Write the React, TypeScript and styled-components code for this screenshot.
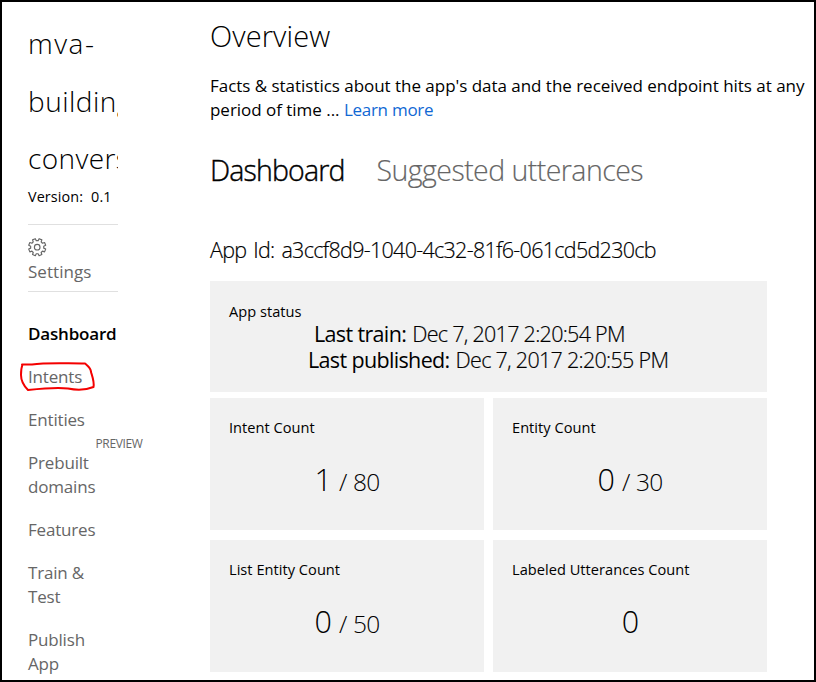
import React from "react";
import styled, { createGlobalStyle } from "styled-components";

const GlobalStyle = createGlobalStyle`
  *, *::before, *::after { box-sizing: border-box; }
  body {
    margin: 0;
    background: #fff;
    color: #000;
    font-family: "Open Sans", "Noto Sans", sans-serif;
  }
`;

const Frame = styled.div`
  display: grid;
  grid-template-columns: 90px 1fr;
  column-gap: 92px;
  width: 816px;
  height: 682px;
  padding-left: 26px;
  border: 2px solid #000;
  overflow: hidden;
  white-space: nowrap;
`;

const Sidebar = styled.aside`
  display: flex;
  flex-direction: column;
`;

const AppName = styled.h1`
  margin: 13px 0 0;
  overflow: hidden;
  font-size: 28px;
  font-weight: 300;
  line-height: 57.5px;
`;

const NameLine = styled.span<{ $spacing: number }>`
  display: block;
  letter-spacing: ${(p) => p.$spacing}px;
`;

const Version = styled.div`
  display: flex;
  gap: 8px;
  height: 38px;
  margin-top: -2px;
  font-size: 14.4px;
  line-height: 21px;
  letter-spacing: 0.1px;
`;

const SettingsLink = styled.a`
  display: flex;
  flex-direction: column;
  height: 68px;
  padding-top: 13px;
  border-top: 1px solid #e0e0e0;
  border-bottom: 1px solid #e0e0e0;
  color: #666;
  font-size: 17px;
  line-height: 24px;
  letter-spacing: 0.05px;

  svg { margin-bottom: 3px; }
`;

const Nav = styled.nav`
  display: flex;
  flex-direction: column;
  gap: 19px;
  margin-top: 30px;
`;

const NavItem = styled.a<{ $active?: boolean }>`
  position: relative;
  color: ${(p) => (p.$active ? "#000" : "#666")};
  font-size: 17px;
  font-weight: ${(p) => (p.$active ? 600 : 400)};
  line-height: 24px;
  letter-spacing: -0.18px;
  white-space: pre-line;
`;

const PreviewTag = styled.span`
  position: absolute;
  top: -15px;
  left: 67.5px;
  font-size: 12px;
  line-height: 16px;
  letter-spacing: -0.36px;
`;

const Ring = styled.svg`
  position: absolute;
  top: -5px;
  left: -10px;
  overflow: visible;
`;

const Main = styled.main`
  display: flex;
  flex-direction: column;
`;

const Heading = styled.h2`
  margin: 14px 0 0;
  font-size: 29px;
  font-weight: 300;
  line-height: 40px;
  letter-spacing: 0.1px;
`;

const Intro = styled.p`
  margin: 18px 0 0;
  font-size: 17px;
  line-height: 24px;
  letter-spacing: -0.03px;
`;

const IntroLink = styled.a`
  color: #1068d4;
  letter-spacing: -0.27px;
`;

const Tabs = styled.div`
  display: flex;
  gap: 32px;
  margin-top: 28px;
  font-size: 28.5px;
  line-height: 40px;
`;

const Tab = styled.span<{ $active?: boolean }>`
  color: ${(p) => (p.$active ? "#000" : "#666")};
  font-weight: 300;
  letter-spacing: ${(p) => (p.$active ? -0.85 : -0.55)}px;
  -webkit-text-stroke: ${(p) => (p.$active ? 0.4 : 0.15)}px currentColor;
`;

const AppId = styled.div`
  margin-top: 45px;
  font-size: 21.5px;
  font-weight: 300;
  line-height: 30px;
  letter-spacing: -0.7px;
  word-spacing: 2px;
  -webkit-text-stroke: 0.2px currentColor;
`;

const CardRow = styled.div<{ $height: number; $offset: number }>`
  display: grid;
  grid-template-columns: 274px 274px;
  grid-auto-rows: ${(p) => p.$height}px;
  gap: 10px 9px;
  margin-top: ${(p) => p.$offset}px;
`;

const Card = styled.section`
  padding: 19px 19px 0;
  background: #f1f1f1;
`;

const StatusCard = styled(Card)`
  grid-column: 1 / -1;
  padding-top: 20px;
`;

const CardTitle = styled.h3`
  margin: 0;
  font-size: 14.6px;
  font-weight: 400;
  line-height: 21px;
  letter-spacing: 0.03px;
`;

const StatusList = styled.dl`
  margin: -1px 0 0;
  font-size: 21.5px;
  line-height: 26px;
`;

const StatusLine = styled.div<{ $indent: number }>`
  display: flex;
  gap: 6px;
  padding-left: ${(p) => p.$indent}px;
`;

const Term = styled.dt`
  letter-spacing: -0.65px;
`;

const Value = styled.dd`
  margin: 0;
  font-weight: 300;
  letter-spacing: -0.71px;
  -webkit-text-stroke: 0.2px currentColor;
`;

const Count = styled.div`
  display: flex;
  justify-content: center;
  align-items: baseline;
  gap: 8px;
  margin-top: 20px;
  font-size: 30.5px;
  font-weight: 300;
  line-height: 42px;
  letter-spacing: -1px;
`;

const Limit = styled.span`
  font-size: 24.5px;
  letter-spacing: -0.8px;
  word-spacing: 1px;
`;

const counts: { title: string; value: string; limit?: string }[] = [
  { title: "Intent Count", value: "1", limit: "80" },
  { title: "Entity Count", value: "0", limit: "30" },
  { title: "List Entity Count", value: "0", limit: "50" },
  { title: "Labeled Utterances Count", value: "0" },
];

// Builds a cog outline with flat-topped teeth around a 19px box.
function gearPath(teeth: number, outer: number, inner: number) {
  const pts: string[] = [];
  const step = (Math.PI * 2) / teeth;
  for (let i = 0; i < teeth; i++) {
    const a = i * step + step / 2;
    [[-0.32, inner], [-0.22, outer], [0.22, outer], [0.32, inner]].forEach(([o, r]) => {
      const t = a + o * step;
      pts.push(`${(9.2 + r * Math.cos(t)).toFixed(2)} ${(9.2 + r * Math.sin(t)).toFixed(2)}`);
    });
  }
  return `M${pts.join("L")}Z`;
}

function GearIcon() {
  return (
    <svg width="19" height="19" viewBox="0 0 19 19" fill="none" stroke="#666" strokeWidth="1.15" strokeLinejoin="round">
      <path d={gearPath(8, 8.7, 6.6)} />
      <circle cx="9.2" cy="9.2" r="2.8" />
    </svg>
  );
}

export default function App() {
  return (
    <>
      <GlobalStyle />
      <Frame>
        <Sidebar>
          <AppName>
            <NameLine $spacing={1.5}>mva-</NameLine>
            <NameLine $spacing={0.5}>building</NameLine>
            <NameLine $spacing={0.4}>convers</NameLine>
          </AppName>
          <Version>
            <span>Version:</span>
            <span>0.1</span>
          </Version>
          <SettingsLink>
            <GearIcon />
            Settings
          </SettingsLink>
          <Nav>
            <NavItem $active>Dashboard</NavItem>
            <NavItem>
              Intents
              <Ring width="78" height="33" viewBox="0 0 78 33" fill="none" stroke="#f40000" strokeWidth="2" strokeLinecap="round" strokeLinejoin="round">
                <path d="M4 4.500 L14 4.500 C28 2.500 45 3.500 67 3.500 C70 6 73 8 73 12 C74.500 17 76.500 22 75.500 27 C68 30 60 30.500 50 28.500 C38 27 24 28.500 10 30 C6 26 3 21 3 15 C3 10 3.500 7 4.500 4.500" />
              </Ring>
            </NavItem>
            <NavItem>Entities</NavItem>
            <NavItem>
              {"Prebuilt\ndomains"}
              <PreviewTag>PREVIEW</PreviewTag>
            </NavItem>
            <NavItem>Features</NavItem>
            <NavItem>{"Train &\nTest"}</NavItem>
            <NavItem>{"Publish\nApp"}</NavItem>
          </Nav>
        </Sidebar>
        <Main>
          <Heading>Overview</Heading>
          <Intro>
            Facts &amp; statistics about the app's data and the received endpoint hits at any
            <br />
            period of time ... <IntroLink>Learn more</IntroLink>
          </Intro>
          <Tabs>
            <Tab $active>Dashboard</Tab>
            <Tab>Suggested utterances</Tab>
          </Tabs>
          <AppId>App Id: a3ccf8d9-1040-4c32-81f6-061cd5d230cb</AppId>
          <CardRow $height={111} $offset={16}>
            <StatusCard>
              <CardTitle>App status</CardTitle>
              <StatusList>
                <StatusLine $indent={85}>
                  <Term>Last train:</Term>
                  <Value>Dec 7, 2017 2:20:54 PM</Value>
                </StatusLine>
                <StatusLine $indent={79}>
                  <Term>Last published:</Term>
                  <Value>Dec 7, 2017 2:20:55 PM</Value>
                </StatusLine>
              </StatusList>
            </StatusCard>
          </CardRow>
          <CardRow $height={132} $offset={6}>
            {counts.map((c) => (
              <Card key={c.title}>
                <CardTitle>{c.title}</CardTitle>
                <Count>
                  <span>{c.value}</span>
                  {c.limit && <Limit>/ {c.limit}</Limit>}
                </Count>
              </Card>
            ))}
          </CardRow>
        </Main>
      </Frame>
    </>
  );
}
